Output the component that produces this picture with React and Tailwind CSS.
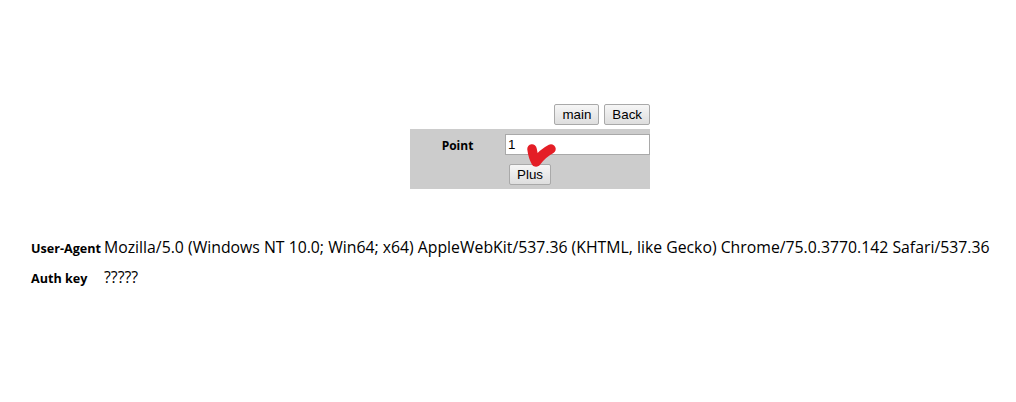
export default function App() {
  return (
    <div className="w-[1016px] h-[402px] bg-white font-['Open_Sans',sans-serif] text-black">
      <div className="pt-[104px] pl-[410px]">
        <div className="w-[240px] flex justify-end gap-[5px] h-[21px]">
          <button className="h-[21px] px-[7px] border border-[#a9a9a9] rounded-[2px] bg-gradient-to-b from-[#f6f6f6] to-[#dedede] font-['Liberation_Sans',sans-serif] text-[13.33px] leading-none">main</button>
          <button className="h-[21px] px-[7px] border border-[#a9a9a9] rounded-[2px] bg-gradient-to-b from-[#f6f6f6] to-[#dedede] font-['Liberation_Sans',sans-serif] text-[13.33px] leading-none">Back</button>
        </div>
        <div className="relative w-[240px] h-[60px] mt-[4px] bg-[#cccccc] flex">
          <div className="w-[95px] pt-[8px] text-center text-[12px] font-bold">Point</div>
          <div className="flex-1 flex flex-col pt-[5px]">
            <input readOnly value="1" className="w-[145px] h-[21px] bg-white border border-[#a9a9a9] px-[2px] text-[13.33px] font-['Liberation_Sans',sans-serif] outline-none" />
            <button className="mt-[9px] ml-[4px] w-[42px] h-[21px] border border-[#a9a9a9] rounded-[2px] bg-gradient-to-b from-[#f6f6f6] to-[#dedede] font-['Liberation_Sans',sans-serif] text-[13.33px] leading-none">Plus</button>
          </div>
          <svg className="absolute left-[112px] top-[12px]" width="44" height="32" viewBox="0 0 44 32">
            <path d="M10 8 Q11 16 14 21 Q21 12 29 8" fill="none" stroke="#e41e26" strokeWidth="9.5" strokeLinecap="round" strokeLinejoin="round" />
          </svg>
        </div>
      </div>
      <div className="mt-[47px] pl-[31px] flex items-baseline">
        <span className="w-[73px] text-[12.6px] font-bold">User-Agent</span>
        <span className="text-[15.8px]">Mozilla/5.0 (Windows NT 10.0; Win64; x64) AppleWebKit/537.36 (KHTML, like Gecko) Chrome/75.0.3770.142 Safari/537.36</span>
      </div>
      <div className="mt-[6px] pl-[31px] flex items-baseline">
        <span className="w-[73px] text-[12.6px] font-bold">Auth key</span>
        <span className="text-[15.8px]">?????</span>
      </div>
    </div>
  );
}
